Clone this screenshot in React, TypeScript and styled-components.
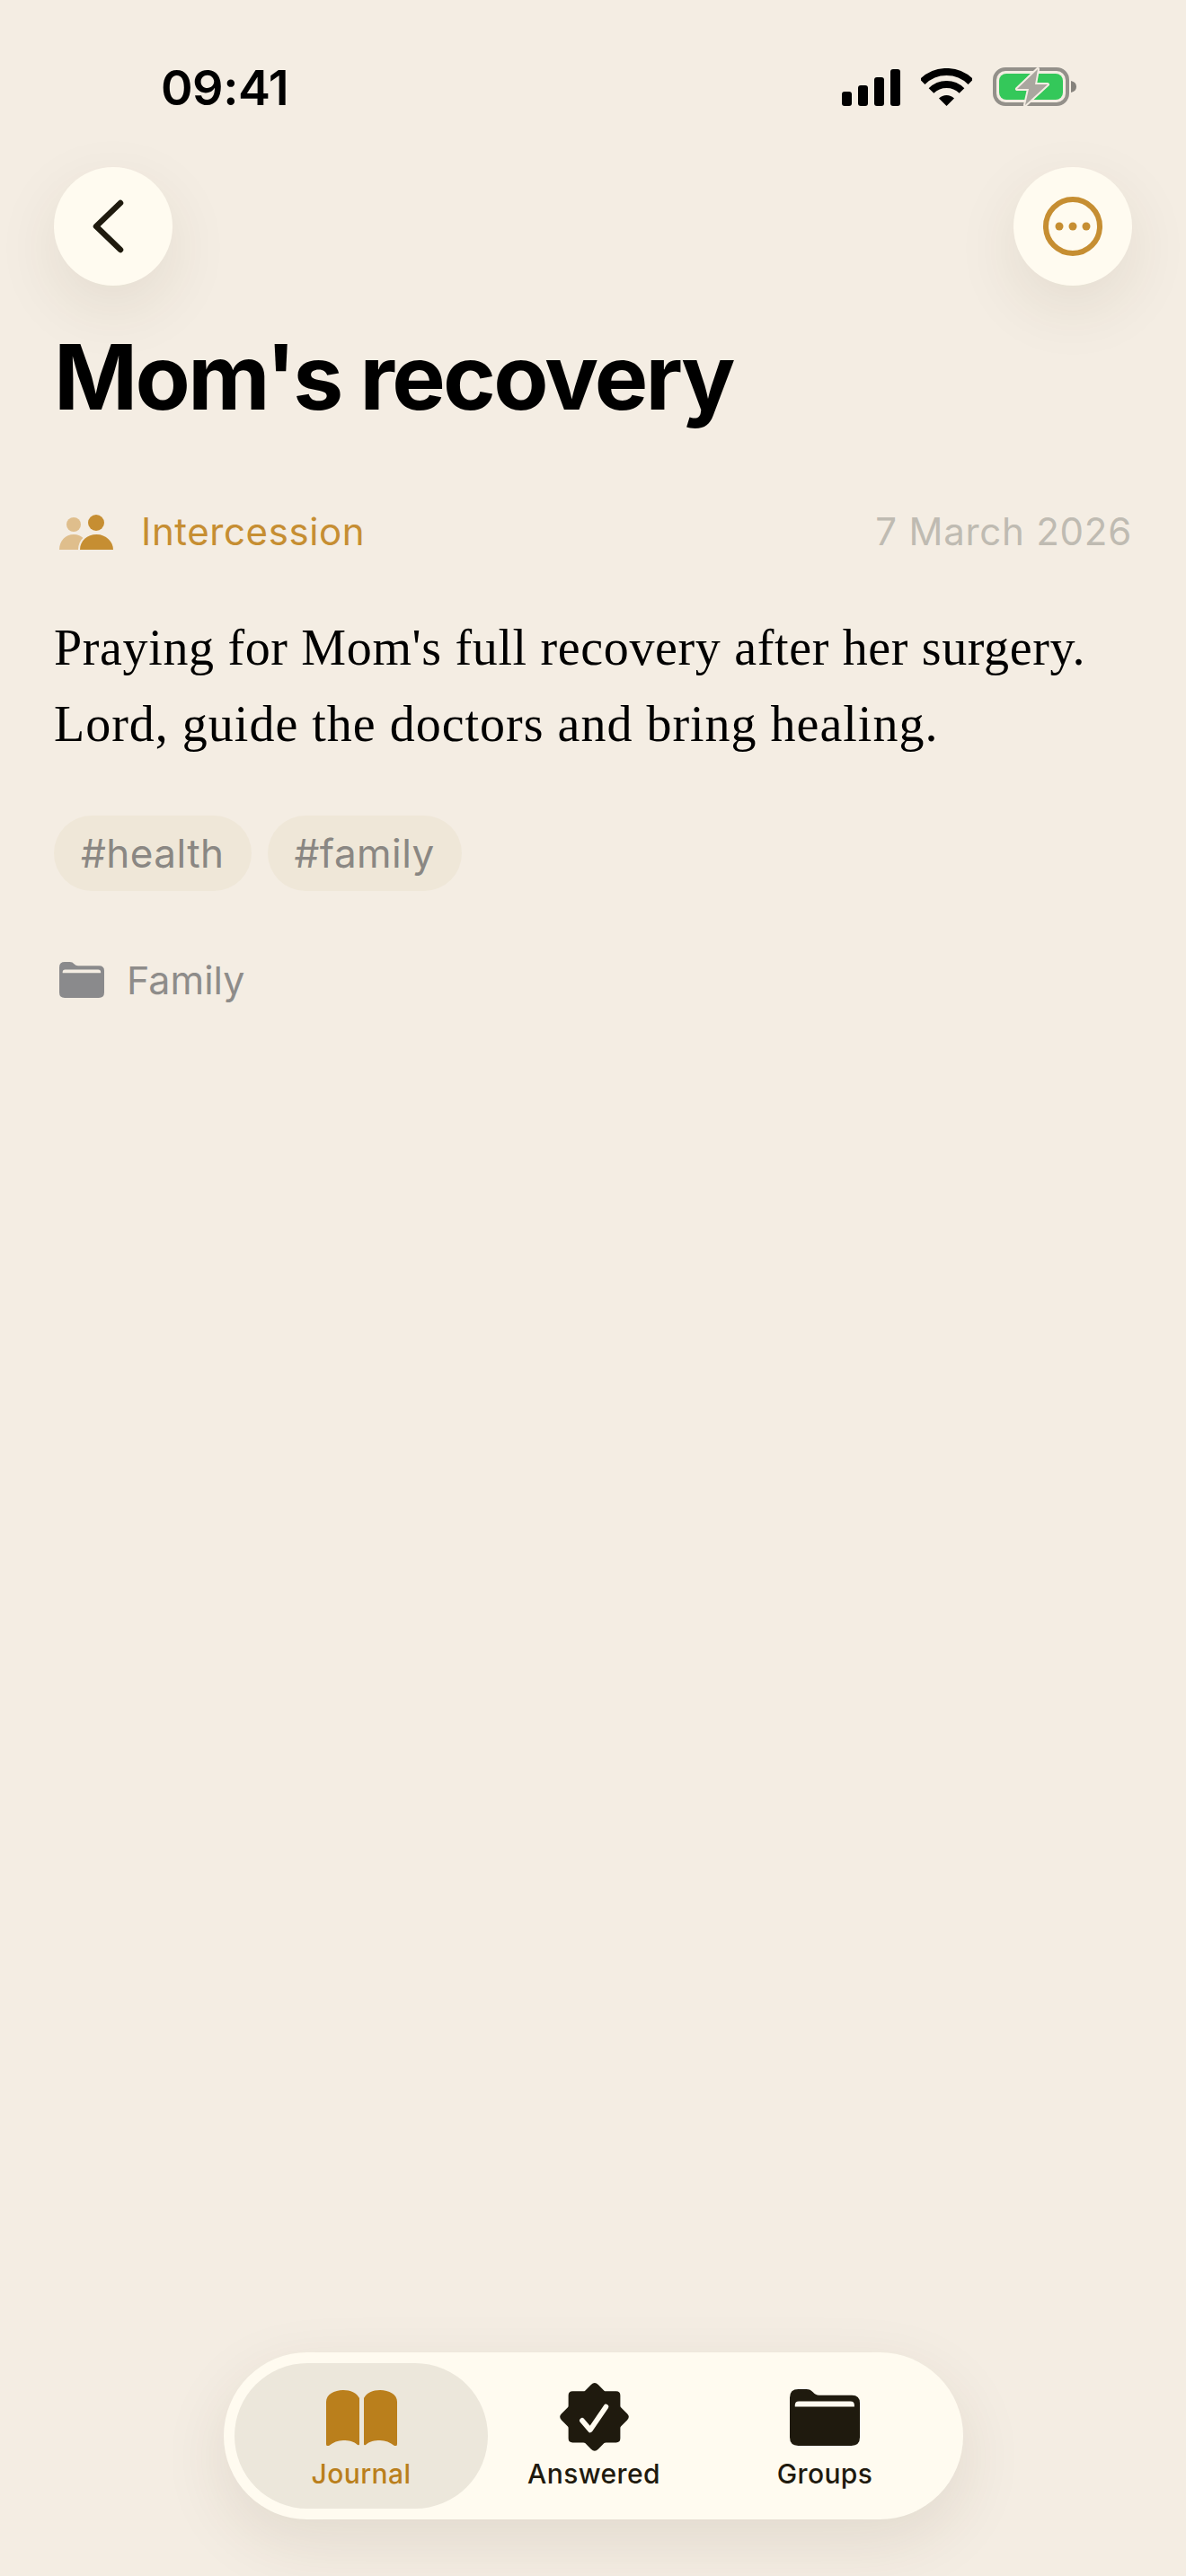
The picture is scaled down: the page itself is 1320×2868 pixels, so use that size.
import React from "react";
import styled, { createGlobalStyle } from "styled-components";

const bg = "#f4ede3";
const cream = "#fffbf0";
const gold = "#c68e32";
const ink = "#1f1a0e";

const GlobalStyle = createGlobalStyle`
  html, body {
    margin: 0;
    padding: 0;
    background: ${bg};
  }
  * {
    box-sizing: border-box;
  }
`;

const Page = styled.div`
  width: 1320px;
  height: 2868px;
  background: ${bg};
  display: flex;
  flex-direction: column;
  font-family: Inter, "Liberation Sans", sans-serif;
  overflow: hidden;
`;

const StatusBar = styled.div`
  height: 68px;
  margin-top: 63px;
  padding: 0 122px 0 179px;
  display: flex;
  align-items: center;
  justify-content: space-between;
`;

const Time = styled.span`
  font-size: 54px;
  font-weight: 600;
  color: #000;
  letter-spacing: -0.5px;
`;

const StatusIcons = styled.div`
  display: flex;
  align-items: center;
  gap: 23px;
`;

const Nav = styled.div`
  margin-top: 55px;
  padding: 0 60px;
  display: flex;
  justify-content: space-between;
`;

const RoundButton = styled.button`
  width: 132px;
  height: 132px;
  border: 0;
  padding: 0;
  border-radius: 50%;
  background: ${cream};
  box-shadow: 0 24px 72px rgba(70, 50, 15, 0.09);
  display: flex;
  align-items: center;
  justify-content: center;
`;

const Content = styled.main`
  padding: 0 60px;
`;

const Title = styled.h1`
  margin: 42px 0 0;
  font-size: 100px;
  line-height: 120px;
  font-weight: 700;
  letter-spacing: -2.65px;
  color: #000;
`;

const MetaRow = styled.div`
  margin-top: 82px;
  height: 60px;
  display: flex;
  align-items: center;
  justify-content: space-between;
`;

const Category = styled.div`
  display: flex;
  align-items: center;
  gap: 31px;
  padding-left: 6px;
  font-size: 42px;
  line-height: 60px;
  letter-spacing: 0.6px;
  color: ${gold};
`;

const DateText = styled.span`
  font-size: 42px;
  line-height: 60px;
  letter-spacing: 0.75px;
  color: #bfbbb2;
`;

const Body = styled.div`
  margin: 57px 0 0;
  font-family: "Liberation Serif", serif;
  font-size: 56px;
  line-height: 85px;
  color: #000;
`;

const BodyLine = styled.div<{ $spacing: number }>`
  letter-spacing: ${(p) => p.$spacing}px;
  white-space: nowrap;
`;

const Tags = styled.div`
  margin-top: 59px;
  display: flex;
  gap: 18px;
`;

const Tag = styled.span`
  height: 84px;
  padding: 0 30px;
  border-radius: 42px;
  background: #efe7d8;
  color: #8a8783;
  font-size: 44px;
  line-height: 84px;
  letter-spacing: 0.45px;
`;

const FolderRow = styled.div`
  margin-top: 69px;
  padding-left: 6px;
  display: flex;
  align-items: center;
  gap: 25px;
  font-size: 43px;
  line-height: 60px;
  color: #8e8c8a;
`;

const TabBar = styled.nav`
  margin: auto auto 63px 249px;
  width: 823px;
  height: 186px;
  padding: 12px;
  border-radius: 93px;
  background: ${cream};
  box-shadow: 0 24px 72px rgba(70, 50, 15, 0.1);
  display: grid;
  grid-template-columns: 282px 236px 278px;
`;

const TabItem = styled.div<{ $active?: boolean }>`
  border-radius: 81px;
  background: ${(p) => (p.$active ? "#ece7db" : "transparent")};
  color: ${(p) => (p.$active ? "#ba7f1c" : ink)};
  display: flex;
  flex-direction: column;
  align-items: center;
`;

const TabIcon = styled.div`
  height: 77px;
  margin-top: 22px;
  display: flex;
  align-items: center;
  justify-content: center;
`;

const TabLabel = styled.span`
  margin-top: 6px;
  font-size: 30px;
  line-height: 36px;
  font-weight: 500;
  letter-spacing: 0.4px;
`;

function SignalIcon() {
  return (
    <svg width="65" height="41" viewBox="0 0 65 41" fill="#000">
      <rect x="0" y="25" width="11" height="16" rx="3" />
      <rect x="18" y="18" width="11" height="23" rx="3" />
      <rect x="36" y="9" width="11" height="32" rx="3" />
      <rect x="54" y="0" width="11" height="41" rx="3" />
    </svg>
  );
}

function WifiIcon() {
  return (
    <svg width="57" height="42" viewBox="0 0 57 42" fill="none" stroke="#000" strokeWidth="8">
      <path d="M1.6 15.1 A38 38 0 0 1 55.4 15.1" />
      <path d="M11.5 25 A24 24 0 0 1 45.5 25" />
      <path d="M28.5 42 L20 33.5 A12 12 0 0 1 37 33.5 Z" fill="#000" stroke="none" />
    </svg>
  );
}

function BatteryIcon() {
  return (
    <svg width="93" height="44" viewBox="0 0 93 44" fill="none">
      <rect x="2" y="2" width="81" height="39" rx="12" stroke="#93908a" strokeWidth="4" />
      <rect x="7" y="7" width="71" height="29" rx="8" fill="#34c85a" />
      <path d="M87 15 C91 16 93 18 93 21.5 C93 25 91 27 87 28 Z" fill="#85827c" />
      <path
        d="M50 2 L27 24 H40 L36 42 L61 19 H47 Z"
        fill="#aaa69f"
        stroke={bg}
        strokeWidth="4"
        strokeLinejoin="round"
        paintOrder="stroke"
      />
    </svg>
  );
}

function BackIcon() {
  return (
    <svg width="46" height="60" viewBox="0 0 46 60" fill="none">
      <path
        d="M31 4 L4 30 L31 56"
        stroke={ink}
        strokeWidth="6.5"
        strokeLinecap="round"
        strokeLinejoin="round"
      />
    </svg>
  );
}

function MoreIcon() {
  return (
    <svg width="66" height="66" viewBox="0 0 66 66" fill="none">
      <circle cx="33" cy="33" r="30" stroke={gold} strokeWidth="6" />
      <circle cx="18" cy="33" r="4.5" fill={gold} />
      <circle cx="33" cy="33" r="4.5" fill={gold} />
      <circle cx="48" cy="33" r="4.5" fill={gold} />
    </svg>
  );
}

function PeopleIcon() {
  return (
    <svg width="60" height="40" viewBox="0 0 60 40">
      <circle cx="16" cy="12" r="8" fill="#dfbe8c" />
      <path d="M0 40 C0 30 7 23 16 23 C25 23 32 30 32 40 Z" fill="#dfbe8c" />
      <circle cx="41" cy="10" r="9" fill={gold} />
      <path
        d="M23 40 C23 30 31 23 41.5 23 C52 23 60 31 60 40 Z"
        fill={gold}
        stroke={bg}
        strokeWidth="4"
        paintOrder="stroke"
      />
    </svg>
  );
}

function FolderIcon({ width, height, fill, stripe }: { width: number; height: number; fill: string; stripe: string }) {
  return (
    <svg width={width} height={height} viewBox="28 27 230 188" preserveAspectRatio="none">
      <path
        d="M28 55 Q28 27 56 27 H82 Q96 27 104 37 Q112 47 124 47 H232 Q258 47 258 73 V187 Q258 215 230 215 H56 Q28 215 28 187 Z"
        fill={fill}
      />
      <path d="M45 85 V80 Q45 67 58 67 H227 Q240 67 240 80 V85 Z" fill={stripe} />
    </svg>
  );
}

function BookIcon() {
  const page =
    "M0 13 C0 5 9 0 19 0 C27 0 34 3 37 9 V60 Q37 62 35 61 C31 57 25 56 19 56 C13 56 8 58 3 62 H1 Q0 62 0 60 Z";
  return (
    <svg width="79" height="62" viewBox="0 0 79 62" fill="#ba7f1c">
      <path d={page} />
      <path d={page} transform="matrix(-1 0 0 1 79 0)" />
    </svg>
  );
}

function BadgeIcon() {
  return (
    <svg width="77" height="77" viewBox="33 22 232 232">
      <path
        d="M138 28 Q150 16 162 28 L182 48 Q184 50 188 50 H222 Q236 50 236 64 V98 Q236 102 238 104 L259 125 Q270 136 259 147 L238 168 Q236 170 236 174 V208 Q236 222 222 222 H188 Q184 222 182 224 L162 244 Q150 256 138 244 L118 224 Q116 222 112 222 H76 Q62 222 62 208 V174 Q62 170 60 168 L39 147 Q28 136 39 125 L60 104 Q62 102 62 98 V64 Q62 50 76 50 H112 Q116 50 118 48 Z"
        fill={ink}
      />
      <path
        d="M108 148 L135 180 L188 102"
        fill="none"
        stroke={cream}
        strokeWidth="17"
        strokeLinecap="round"
        strokeLinejoin="round"
      />
    </svg>
  );
}

export default function App() {
  return (
    <Page>
      <GlobalStyle />
      <StatusBar>
        <Time>09:41</Time>
        <StatusIcons>
          <SignalIcon />
          <WifiIcon />
          <BatteryIcon />
        </StatusIcons>
      </StatusBar>

      <Nav>
        <RoundButton aria-label="Back">
          <BackIcon />
        </RoundButton>
        <RoundButton aria-label="More">
          <MoreIcon />
        </RoundButton>
      </Nav>

      <Content>
        <Title>Mom's recovery</Title>
        <MetaRow>
          <Category>
            <PeopleIcon />
            Intercession
          </Category>
          <DateText>7 March 2026</DateText>
        </MetaRow>
        <Body>
          <BodyLine $spacing={0.65}>Praying for Mom's full recovery after her surgery.</BodyLine>
          <BodyLine $spacing={1}>Lord, guide the doctors and bring healing.</BodyLine>
        </Body>
        <Tags>
          <Tag>#health</Tag>
          <Tag>#family</Tag>
        </Tags>
        <FolderRow>
          <FolderIcon width={50} height={40} fill="#8a8a8c" stripe={bg} />
          Family
        </FolderRow>
      </Content>

      <TabBar>
        <TabItem $active>
          <TabIcon>
            <BookIcon />
          </TabIcon>
          <TabLabel>Journal</TabLabel>
        </TabItem>
        <TabItem>
          <TabIcon>
            <BadgeIcon />
          </TabIcon>
          <TabLabel>Answered</TabLabel>
        </TabItem>
        <TabItem>
          <TabIcon>
            <FolderIcon width={78} height={63} fill={ink} stripe={cream} />
          </TabIcon>
          <TabLabel>Groups</TabLabel>
        </TabItem>
      </TabBar>
    </Page>
  );
}
